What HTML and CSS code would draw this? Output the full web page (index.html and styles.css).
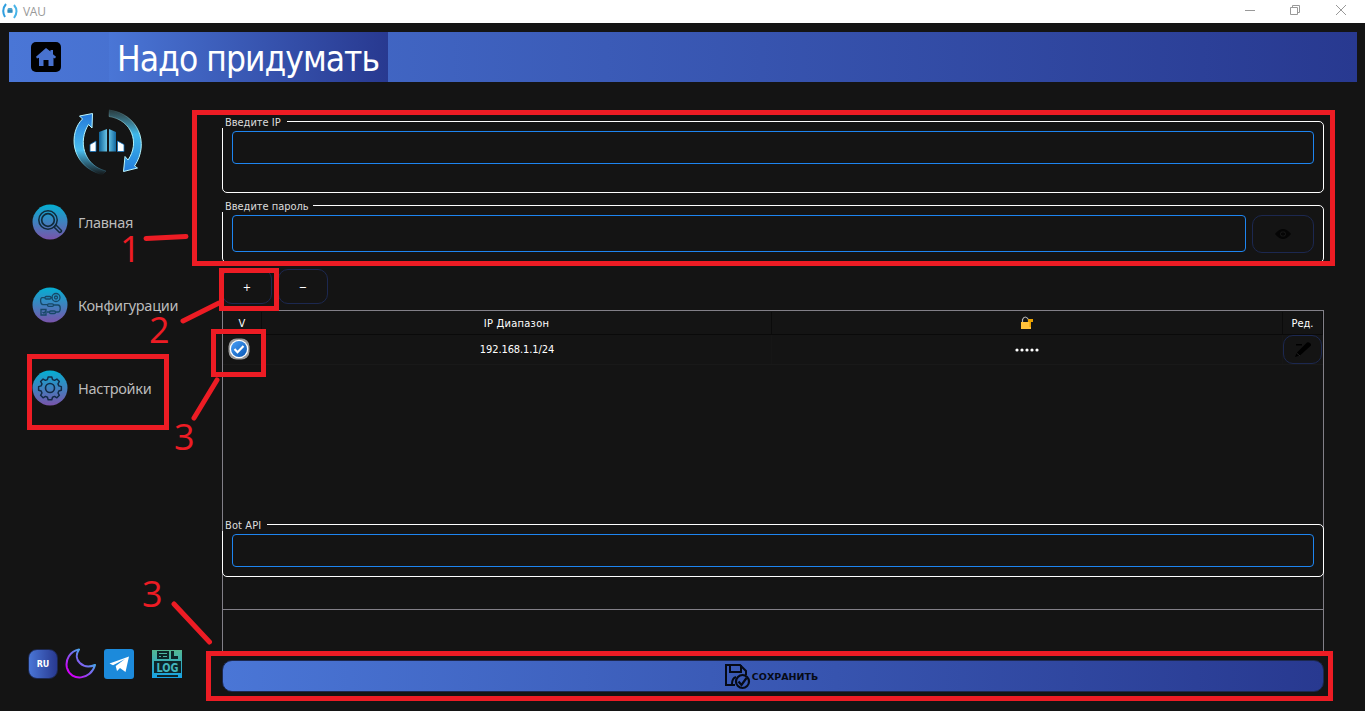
FILE: index.html
```
<!DOCTYPE html>
<html lang="ru">
<head>
<meta charset="utf-8">
<title>VAU</title>
<link rel="stylesheet" href="styles.css">
</head>
<body>
<div class="titlebar">
  <svg class="app-icon" width="18" height="18" viewBox="0 0 18 18"><g fill="none" stroke-width="2"><path d="M5 2Q0 8 4 15" stroke="#2f9fe0"/><path d="M13 3Q18 9 13 16" stroke="#48b4e8"/></g><path d="M6.500 11V7l1-1h3l1 1v4z" fill="#4fa3cc"/><path d="M6.500 9h5" stroke="#1677b0"/></svg>
  <span class="app-name">VAU</span>
  <svg class="win-buttons" width="110" height="20" viewBox="0 0 110 20" fill="none" stroke="#999"><path d="M5 10.500h10"/><path d="M50.500 7.500h7v7h-7zM52.500 7.500v-2h7v7h-2"/><path d="M96 5l10 10M106 5l-10 10"/></svg>
</div>
<header class="header">
  <div class="home"><svg width="30" height="30" viewBox="0 0 30 30"><rect width="30" height="30" rx="5"/><path d="M15 6l4.500 3.600V8h2.500v4.200l3 2.600-1 1.700-1.500-.8V24h-5v-6h-5v6H8v-8.300l-2 .9-1-1.800z" fill="#4872cf"/></svg></div>
  <h1 class="title">Надо придумать</h1>
</header>
<div class="body">
  <aside class="sidebar">
    <svg class="logo" width="70" height="68" viewBox="0 0 70 68">
      <defs>
        <linearGradient id="la" x1="0" y1="0" x2="0" y2="1"><stop stop-color="#2378da"/><stop offset=".6" stop-color="#49bdee"/><stop offset="1" stop-color="#49bdee" stop-opacity="0"/></linearGradient>
        <linearGradient id="lb" x1="0" y1="0" x2="0" y2="1"><stop stop-color="#62aab9" stop-opacity=".25"/><stop offset=".4" stop-color="#3eb8ea"/><stop offset="1" stop-color="#237ddd"/></linearGradient>
        <linearGradient id="lc"><stop stop-color="#0f6398"/><stop offset=".5" stop-color="#70cbea"/><stop offset="1" stop-color="#1268a0"/></linearGradient>
        <linearGradient id="ea" x1="0" y1="0" x2="0" y2="1"><stop stop-color="#bdf7ff"/><stop offset=".6" stop-color="#aef2fa"/><stop offset="1" stop-color="#49bdee" stop-opacity="0"/></linearGradient>
        <linearGradient id="eb" x1="0" y1="0" x2="0" y2="1"><stop stop-color="#aef2fa" stop-opacity="0"/><stop offset=".4" stop-color="#aef2fa"/><stop offset="1" stop-color="#bdf7ff"/></linearGradient>
      </defs>
      <path d="M19.500 4.500L6.500 7l3 3C-4 23-4 56 29 66l4-4C10 56 5 32 15.500 15.500l3.500 3.500z" fill="url(#la)" stroke="url(#ea)"/>
      <path d="M36 .5C65 5 77 34 61.500 57l3 2-14 3.500 1.500-15 3 3.500C67 34 59 11 36 7.500z" fill="url(#lb)" stroke="url(#eb)"/>
      <path d="M17 42.500V35.500l6-3.500v10.500zM44.500 42.500V32L51 35.500v7z" fill="#fff" stroke="#0b6ab5" stroke-width=".8"/>
      <path d="M26 42.500V23l8-3v22.500zM36 42.500V20l7 3v19.500z" fill="url(#lc)"/>
    </svg>
    <svg width="0" height="0" class="defs"><defs><linearGradient id="nav" x1="0" y1="0" x2="0" y2="1"><stop stop-color="#04afd2"/><stop offset="1" stop-color="#7954aa"/></linearGradient></defs></svg>
    <nav class="nav">
      <a class="nav-item"><svg width="36" height="36" viewBox="0 0 36 36" fill="none" stroke="#102b3b"><circle cx="18" cy="18" r="17.500" fill="url(#nav)" stroke="none"/><circle cx="16" cy="16" r="9.200" stroke-width="1.500"/><circle cx="16" cy="16" r="6.300" stroke-width="1.700"/><path d="M22 23l2-2 5.500 5.500q0 2-2 2z" stroke-width="1.500"/></svg><span>Главная</span></a>
      <a class="nav-item"><svg width="36" height="36" viewBox="0 0 36 36" fill="none" stroke="#174867" stroke-width="1.300"><circle cx="18" cy="18" r="17.500" fill="url(#nav)" stroke="none"/><circle cx="24" cy="10.500" r="4"/><circle cx="24" cy="10.500" r="1.500"/><rect x="13" y="9.500" width="6" height="2.500" rx="1.200"/><rect x="15.500" y="16.800" width="6" height="2.500" rx="1.200"/><rect x="17.500" y="24" width="6" height="2.500" rx="1.200"/><path d="M13 10.700H10c-2 0-2 7 1 7h4.500M21.500 18H26c3 0 3 7 0 7h-2.500M17.500 25H15M19 10.700h1.500M9 22.500h5v5.500H9zM10.500 25l1.500 1.200 2-2.500"/></svg><span>Конфигурации</span></a>
      <a class="nav-item"><svg width="36" height="36" viewBox="0 0 36 36" fill="none" stroke="#122b46" stroke-width="1.600" stroke-linejoin="round"><circle cx="18" cy="18" r="17.500" fill="url(#nav)" stroke="none"/><circle cx="18" cy="18" r="4.500"/><path d="M16 7.500h4l.8 2.800 2.200.9 2.600-1.500 2.700 2.700-1.500 2.600.9 2.200 2.800.8v4l-2.800.8-.9 2.200 1.500 2.600-2.700 2.700-2.600-1.500-2.200.9-.8 2.800h-4l-.8-2.800-2.200-.9-2.600 1.500-2.700-2.700 1.500-2.600-.9-2.200-2.800-.8v-4l2.800-.8.9-2.200-1.500-2.600 2.700-2.700 2.600 1.500 2.200-.9z" transform="translate(1.600 .2) scale(.91)"/></svg><span>Настройки</span></a>
    </nav>
    <div class="tools">
      <button class="lang">RU</button>
      <svg class="moon" width="32" height="32" viewBox="0 0 32 32"><defs><linearGradient id="mo" x1="0" y1="1" x2="1" y2="0"><stop offset=".15" stop-color="#cf00f8"/><stop offset=".8" stop-color="#38b9e8"/></linearGradient></defs><path d="M14 1.500C5 3 0 12 2 20c4 14 24 12 28-3C18 22 7 12 14 1.500z" fill="none" stroke="url(#mo)" stroke-width="2" stroke-linejoin="round"/></svg>
      <svg class="telegram" width="30" height="30" viewBox="0 0 30 30"><rect width="30" height="30" rx="3" fill="#1c8adb"/><path d="M5.500 14.500L25 7.500 21.500 23l-5.500-4-3 3-1.300-5L21 10 9 16.300z" fill="#fff"/></svg>
      <svg class="log" width="30" height="28" viewBox="0 0 30 28"><defs><linearGradient id="lg" x1="0" y1="0" x2="0" y2="1"><stop stop-color="#54b792"/><stop offset="1" stop-color="#16a2e5"/></linearGradient></defs><path d="M0 0h30v28H0z" fill="url(#lg)"/><path d="M5 1h12v8H5zM19 1h3v5h4v3h-7zM2 11h27v12H2zM5 25h21v2H5z" fill="#0d2529"/><path d="M7 3.500h8M7 6.500h2M11 6.500h4" stroke="#4cb5a1"/><text x="15.500" y="21.500" text-anchor="middle" textLength="22" lengthAdjust="spacingAndGlyphs" class="log-text">LOG</text></svg>
    </div>
  </aside>
  <main class="main">
    <section class="group group-ip"><span class="legend legend-ip">Введите IP</span><div class="field"></div></section>
    <section class="group group-pass"><span class="legend legend-pass">Введите пароль</span>
      <div class="pass-row"><div class="field"></div><button class="eye"><svg width="16" height="10" viewBox="0 0 16 12" preserveAspectRatio="none"><path d="M0 6q8-12 16 0-8 12-16 0z" fill="#050505"/><rect x="5.500" y="3.500" width="5" height="5" rx="2" fill="none" stroke="#1b1b1b"/></svg></button></div>
    </section>
    <div class="actions"><button>+</button><button>−</button></div>
    <section class="table">
      <div class="row head"><span>V</span><span class="range">IP Диапазон</span><span><svg width="14" height="14" viewBox="0 0 14 14"><path d="M2.500 7V3.500q2.500-5 6 0V6" fill="none" stroke="#b7b7b7" stroke-width="1.200"/><path d="M1 6h10v7H1z" fill="#ffc13b"/><path d="M8 3h5v3h-2v5H9.500V6H8z" fill="#e9a000"/></svg></span><span>Ред.</span></div>
      <div class="row data"><span class="check"><svg width="22" height="22" viewBox="0 0 22 22"><defs><linearGradient id="ck" x1="0" y1="0" x2="1" y2="1"><stop stop-color="#4aa0f7"/><stop offset="1" stop-color="#0756b5"/></linearGradient></defs><rect x=".5" y=".5" width="21" height="21" rx="8" fill="#999"/><circle cx="11" cy="11" r="9.300" fill="#fff"/><circle cx="11" cy="11" r="8" fill="url(#ck)"/><path d="M6.500 11l3 3.300 6-6.300" fill="none" stroke="#fff" stroke-width="2.100"/></svg></span><span class="address">192.168.1.1/24</span><span><svg width="24" height="4" viewBox="0 0 24 4" fill="#fff"><circle cx="2" cy="2" r="1.600"/><circle cx="7" cy="2" r="1.600"/><circle cx="12" cy="2" r="1.600"/><circle cx="17" cy="2" r="1.600"/><circle cx="22" cy="2" r="1.600"/></svg></span><button class="edit"><svg width="18" height="18" viewBox="0 0 18 18"><path d="M1 16l1.500-4L13 1.500q2-1 4 1.500v1.500L6 14.500zM2 3h6v1.500H2z"/><path d="M2.500 12L6 15" stroke="#222"/></svg></button></div>
      <div class="table-space"></div>
      <div class="group group-bot"><span class="legend legend-bot">Bot API</span><div class="field"></div></div>
      <div class="table-line"></div>
    </section>
    <button class="save"><svg width="27" height="27" viewBox="0 0 27 27" fill="none" stroke="#060a16" stroke-width="2"><path d="M11 22H2V2h14l6 6v4M6 2v7h11V2M8 21c0-4 1-6 4-7"/><circle cx="18.500" cy="18.500" r="6.500" stroke-width="2.200"/><path d="M14.500 18.500l3 3.500 5-7" stroke-width="2.200"/></svg><span>СОХРАНИТЬ</span></button>
  </main>
</div>
<svg class="notes" width="1365" height="711" viewBox="0 0 1365 711">
  <g fill="none" stroke="#ed1c24" stroke-width="5">
    <path d="M194.500 112.500h1138v151h-1138zM221.500 270.500h55v38h-55zM213.500 331.500h50v43h-50zM29.500 356.500h137v71h-137zM208.500 653.500h1122v45h-1122z"/>
    <path d="M146 238.500l40-2M183 321l36-18M217 380l-23 38M174 604l35.500 38" stroke-linecap="round"/>
  </g>
  <g class="note-text"><text x="120" y="262">1</text><text x="149" y="343">2</text><text x="174" y="450">3</text><text x="142" y="607">3</text></g>
</svg>
</body>
</html>
```

FILE: styles.css
```
* { box-sizing: border-box; }
body { margin: 0; width: 1365px; height: 711px; overflow: hidden; position: relative; background: #141414; color: #fff; font: 11px "DejaVu Sans Condensed", "DejaVu Sans", sans-serif; font-stretch: condensed; }
svg { display: block; flex: none; }
button { margin: 0; padding: 0; background: none; color: #fff; border: 1px solid #1c2850; border-radius: 10px; font: inherit; display: flex; align-items: center; justify-content: center; }
.titlebar { height: 23px; background: #fff; display: flex; align-items: center; padding-left: 1px; }
.app-icon { margin-top: -2px; }
.app-name { margin-left: 4px; color: #999; font: 12px "Open Sans", sans-serif; letter-spacing: -.3px; }
.win-buttons { margin: -3px 15px 0 auto; }
.header { margin: 9px 8px 0 9px; height: 50px; display: flex; background: linear-gradient(90deg, #4a76d6, #283990); }
.home { width: 100px; padding: 10px 0 0 22px; }
.title { margin: 0; width: 279px; padding-left: 8px; font-size: 35px; font-weight: 400; line-height: 54px; letter-spacing: -.95px; white-space: nowrap; background: linear-gradient(90deg, #4a76d6, #283990); height: 50px; }
.body { display: flex; height: 629px; }
.sidebar { width: 222px; padding: 27px 0 0 28px; }
.logo { margin-left: 45px; }
.defs { height: 0; }
.nav { margin-top: 27px; height: 399px; padding-left: 4px; }
.nav-item { height: 36px; margin-bottom: 47px; display: flex; align-items: center; color: #bbb; font: 14.500px "Noto Sans", sans-serif; letter-spacing: -.27px; white-space: nowrap; }
.nav-item span { margin-left: 10px; }
.tools { display: flex; margin-top: 45px; height: 32px; align-items: center; }
.lang { width: 30px; height: 30px; border-radius: 9px; background: linear-gradient(90deg, #4a76d6, #283990); font: bold 8px "DejaVu Sans", sans-serif; }
.moon { margin-left: 7px; }
.telegram { margin-left: 7px; }
.log { margin-left: 18px; }
.log-text { font: bold 12px "DejaVu Sans Condensed", sans-serif; fill: #43b6bd; }
.main { width: 1102px; padding-top: 39px; display: flex; flex-direction: column; }
.group { border: 1px solid #fff; border-radius: 5px; padding: 0 9px; }
.group-ip { height: 72px; }
.group-pass { height: 58px; margin-top: 12px; }
.legend { display: block; height: 14px; margin: -8px 0 0 -10px; padding-left: 3px; background: #141414; color: #ddd; line-height: 18px; letter-spacing: -.03px; white-space: nowrap; }
.legend-ip { width: 65px; }
.legend-pass { width: 91px; }
.legend-bot { width: 45px; padding-left: 2px; border-left: 1px solid #828088; letter-spacing: .1px; }
.field { height: 33px; margin-top: 3px; border: 1px solid #1e85f0; border-radius: 4px; }
.pass-row { display: flex; margin-top: 3px; gap: 6px; }
.pass-row .field { flex: 1; margin: 0; height: 37px; }
.eye { width: 62px; height: 38px; }
.actions { display: flex; gap: 6px; margin-top: 6px; height: 35px; }
.actions button { width: 50px; padding-top: 2px; }
.table { margin-top: 6px; height: 342px; border: 1px solid #828088; border-bottom: 0; }
.row { display: grid; grid-template-columns: 39px 510px 511px 40px; }
.row > span { display: flex; align-items: center; justify-content: center; border-right: 1px solid #0b0b0b; }
.row .range { letter-spacing: .25px; }
.row .address { padding-left: 1px; letter-spacing: -.1px; }
.head { height: 24px; border-bottom: 1px solid #0a0a0a; padding-top: 1px; }
.data { height: 30px; border-bottom: 1px solid #191919; }
.data > span { border-right-color: #161616; }
.data .check { justify-content: flex-start; padding: 0 0 2px 5px; border: 0; }
.edit { width: 39px; height: 29px; }
.table-space { height: 159px; }
.group-bot { height: 53px; width: 1102px; margin-left: -1px; }
.table-line { margin-top: 32px; border-top: 1px solid #828088; }
.save { flex: none; width: 1102px; height: 32px; margin-top: 8px; padding-right: 4px; border-radius: 10px; background: linear-gradient(90deg, #4a76d6, #283990); color: #060a16; font: bold 9.500px "DejaVu Sans", sans-serif; }
.save span { margin-left: 1px; }
.notes { position: absolute; left: 0; top: 0; }
.note-text { font: 36px "Open Sans", sans-serif; fill: #ed1c24; }
```
